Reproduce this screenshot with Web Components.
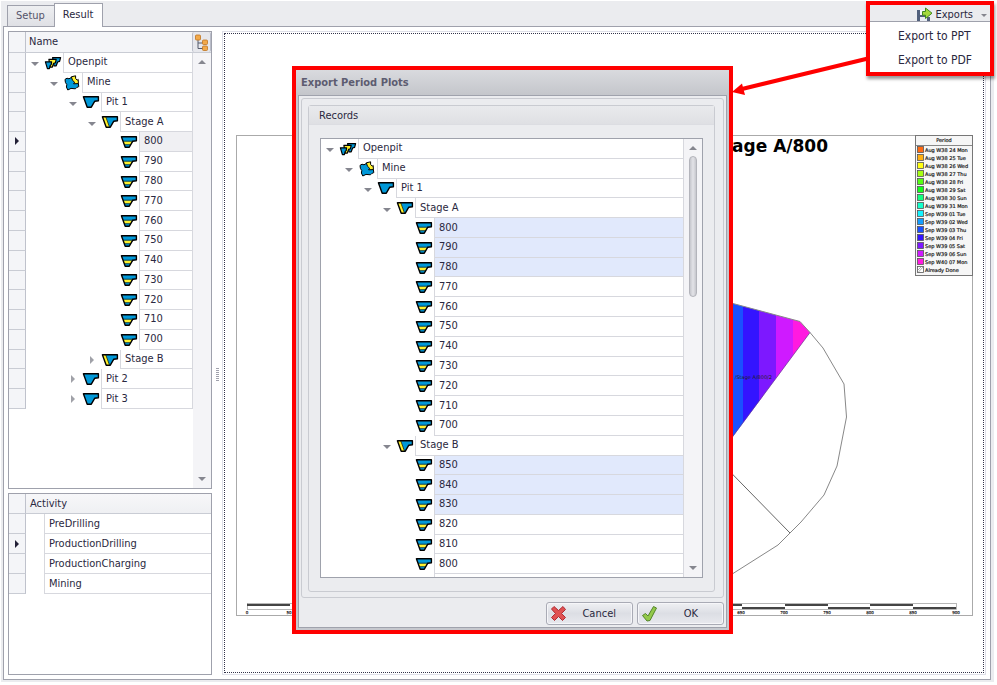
<!DOCTYPE html>
<html lang="en">
<head>
<meta charset="utf-8">
<title>Export Period Plots</title>
<style>
html,body{margin:0;height:100%;background:#fff}
body{font:11px/16px "DejaVu Sans Condensed","DejaVu Sans",sans-serif;color:#2a2840}
</style>
</head>
<body>
<plot-app></plot-app>
<script>
const make = (name, html) => customElements.define(name, class extends HTMLElement {
  constructor(){ super(); this.attachShadow({mode:'open'}); }
  connectedCallback(){
    if (this.shadowRoot.childNodes.length) return;
    this.shadowRoot.innerHTML = typeof html === 'function' ? html(this) : html;
  }
});

/* ---- icons ---- */
const PIT = 'M1.4 .8H16.400V4.700L12.800 5.200 9.300 11.200H5.200Z';
const edge = `<path d="${PIT}" fill="none" stroke="#000" stroke-width="1.400" stroke-linejoin="round"/>`;
const svg = body => `<svg width="18" height="16" viewBox="0 -2 18 16">${body}</svg>`;
const ICONS = {
  pit: svg(`<path d="${PIT}" fill="#0098d8"/>${edge}`),
  stage: svg(`<path d="${PIT}" fill="#0098d8"/><path d="M1.400 .8H5L8.600 11.200H5.200Z" fill="#fff22d"/><path d="M4.800 1 8.400 10.800" stroke="#000" stroke-width=".7"/>${edge}`),
  bench: svg(`<path d="${PIT}" fill="#0098d8"/><path d="M3.600 5.400H12.400L10.600 8.600H4.400Z" fill="#fff22d"/><path d="M3.200 5.200H13M4.200 8.700H10.600" stroke="#000" stroke-width=".6"/>${edge}`),
  openpit: svg(`<g stroke="#000" stroke-width="1.200" stroke-linejoin="round"><path d="M8.600 .6H16.600L15.600 4.400 13.600 5 12.200 8.800H10Z" fill="#0098d8"/><path d="M4.900 2.400H12.200L11.400 5.800 9.600 6.400 8.200 10.200H6.200Z" fill="#fff22d"/><path d="M1.400 4.800H7.600L7.200 7.600 6.200 8.400 5.400 11.600H3.400Z" fill="#0098d8"/></g>`),
  mine: `<svg width="18" height="16" viewBox="0 0 18 16"><g stroke="#000" stroke-width="1" stroke-linejoin="round"><path d="M2 4.400 4 3.200 6 3.800 9 2 13 5 15.400 9 15.800 11.600 13.600 12.600 12.400 13.800 8 13.400 4.800 15 3.400 12 3.800 9.600 2.400 7.400Z" fill="#0098d8"/><path d="M8.400 1.800 12.600 .8 12.600 3.400 14.200 5.200 15.200 4.400 15.400 8.600 10.600 8.800 11.600 7.200 9.400 5.200Z" fill="#fff22d"/></g></svg>`
};

make('tree-row', el => {
  const icon = el.getAttribute('icon'), lv = +el.getAttribute('level'), st = el.getAttribute('state');
  return `<style>
  :host{display:flex;min-height:0;--line:#d7d8de}
  .ind{width:16px;flex:none;background:#f4f5f8;border-right:1px solid #bfc2cc;border-bottom:1px solid #c9ccd4;display:var(--ind,flex);align-items:center;justify-content:center}
  .ind i{border:4px solid transparent;border-left-color:#222036;border-right:0}
  .pad{flex:none;width:${lv*19}px}
  button{flex:none;width:18px;padding:0;border:0;background:none;display:flex;align-items:center;justify-content:center}
  button i{border:4px solid transparent;border-top-color:#85868f;border-bottom:0;margin-top:3px}
  button.c i{border:4px solid transparent;border-left-color:#a0a1a8;border-right:0;margin:0}
  .sp{width:18px;flex:none}
  .ic{width:19px;flex:none;display:flex;align-items:center}
  .cell{flex:1;min-width:0;border-left:1px solid var(--line);border-bottom:1px solid var(--line);padding-left:4px;display:flex;align-items:center;white-space:nowrap}
  :host([sel]) .cell{background:#e1e9fc}
  :host([cur]) .cell{background:#f0f0f3}
  </style>
  <span class="ind">${el.hasAttribute('cur')?'<i></i>':''}</span><span class="pad"></span>
  ${st ? `<button class="${st==='closed'?'c':''}" aria-label="Toggle"><i></i></button>` : '<span class="sp"></span>'}
  <span class="ic">${ICONS[icon]||''}</span><span class="cell"><slot></slot></span>`;
});

make('scroll-strip', el => `<style>
  :host{display:flex;flex-direction:column;justify-content:space-between;align-items:center;background:#f4f4f7;width:18px;flex:none;box-sizing:border-box;padding:7px 0}
  i{border:4px solid transparent}
  .u{border-bottom-color:#85868f;border-top:0}.d{border-top-color:#85868f;border-bottom:0}
  .t{flex:1;width:100%;margin:6px 0;display:flex;justify-content:center;align-items:flex-start}
  .t b{display:${el.hasAttribute('thumb')?'block':'none'};box-sizing:border-box;width:8px;height:35%;border:1px solid #b3b4bb;border-radius:4px;background:linear-gradient(90deg,#c6c7cd,#e3e3e8 50%,#c6c7cd)}
  </style><i class="u"></i><span class="t"><b></b></span><i class="d"></i>`);

const row = (text, level, icon, extra='') => `<tree-row level="${level}" icon="${icon}" ${extra}>${text}</tree-row>`;
const open = 'state="open"', closed = 'state="closed"';
const benches = (from, to, mark={}) => {
  let s=''; for(let n=from;n>=to;n-=10) s+=row(n,4,'bench',mark[n]||''); return s;
};
const head = row('Openpit',0,'openpit',open)+row('Mine',1,'mine',open)+row('Pit 1',2,'pit',open)+row('Stage A',3,'stage',open);

make('result-tree', `<style>
  :host{display:grid;grid-template-rows:21px minmax(0,1fr);border:1px solid #9fa1ac;background:#fff;min-height:0}
  header{display:flex;background:#f4f5f8;border-bottom:1px solid #c9ccd4;box-sizing:border-box}
  .a{width:16px;border-right:1px solid #bfc2cc}
  .n{flex:1;padding-left:3px;line-height:20px}
  button{width:19px;padding:0;border:1px solid #b9bcc8;border-width:0 1px;border-radius:2px;background:#e6e7ec;display:flex;align-items:center;justify-content:center}
  main{display:flex;min-height:0}
  .rows{flex:1;display:grid;grid-auto-rows:1fr;height:356px;border-right:1px solid #d7d8de}
  </style>
  <header><span class="a"></span><span class="n">Name</span><button aria-label="Show hierarchy"><svg width="15" height="17" viewBox="0 0 15 17"><path d="M4 6V14.500H9M4 9H9" fill="none" stroke="#555b6c"/><g fill="#f2a94a" stroke="#bf7420" stroke-width=".8"><rect x="1.500" y="1" width="5" height="5" rx="1"/><rect x="8.500" y="6" width="5" height="4.500" rx="1"/><rect x="8.500" y="12" width="5" height="4.500" rx="1"/></g></svg></button></header>
  <main><div class="rows" role="tree" aria-label="Name">${head}${benches(800,700,{800:'cur'})}${row('Stage B',3,'stage',closed)}${row('Pit 2',2,'pit',closed)}${row('Pit 3',2,'pit',closed)}</div><scroll-strip></scroll-strip></main>`);

make('activity-grid', `<style>
  :host{display:block;border:1px solid #9fa1ac;background:#fff;min-height:0}
  table{width:100%;border-collapse:separate;border-spacing:0;table-layout:fixed}
  th,td{padding:0;height:19px;border-bottom:1px solid #d7d8de;text-align:left;font-weight:400;line-height:18px}
  th{background:linear-gradient(#f7f7f9,#eff0f3);border-color:#c9ccd4}
  .i{width:16px;background:#f4f5f8;border-right:1px solid #bfc2cc;border-bottom-color:#c9ccd4}
  .i i{display:block;width:0;margin-left:6px;border:4px solid transparent;border-left-color:#222036;border-right:0}
  .g{width:18px;border:0;border-right:1px solid #d7d8de}
  td:last-child,th:last-child{padding-left:4px}
  </style>
  <table><colgroup><col style="width:17px"><col style="width:19px"><col></colgroup>
  <tr><th class="i"></th><th colspan="2">Activity</th></tr>
  <tr><td class="i"></td><td class="g"></td><td>PreDrilling</td></tr>
  <tr><td class="i"><i></i></td><td class="g"></td><td>ProductionDrilling</td></tr>
  <tr><td class="i"></td><td class="g"></td><td>ProductionCharging</td></tr>
  <tr><td class="i"></td><td class="g"></td><td>Mining</td></tr></table>`);

/* ---- plot ---- */
const LEGEND = [['Aug W38 24 Mon','#ff6a13'],['Aug W38 25 Tue','#ffb013'],['Aug W38 26 Wed','#ffff13'],['Aug W38 27 Thu','#a6ff13'],['Aug W38 28 Fri','#55ff13'],['Aug W38 29 Sat','#13ff1c'],['Aug W38 30 Sun','#13ff80'],['Aug W39 31 Mon','#13ffcb'],['Sep W39 01 Tue','#13f3ff'],['Sep W39 02 Wed','#139dff'],['Sep W39 03 Thu','#1a50ff'],['Sep W39 04 Fri','#3414ff'],['Sep W39 05 Sat','#7d18ff'],['Sep W39 06 Sun','#cf1aff'],['Sep W40 07 Mon','#ff1ae0'],['Already Done','#fff']];
const legend = LEGEND.map(([t,c],i)=>`<rect x="917.5" y="${146.5+i*8}" width="6" height="6" fill="${c}" stroke="#555" stroke-width=".8"/><text x="925" y="${152+i*8}">${t}</text>`).join('');
const ticks = [650,700,750,800,850,900].map((t,i)=>`<text x="${741+i*43}" y="614" text-anchor="middle">${t}</text>`).join('');
const bars = [[247,290,1],[700,742,1],[742,785,0],[785,828,1],[828,870,0],[870,913,1],[913,956,0]].map(([a,b,up])=>`<rect x="${a}" y="${up?604:607}" width="${b-a}" height="2" fill="#444"/>`).join('');
make('period-plot', `<style>
  :host{display:block;box-sizing:border-box;border:1px solid #dedfe8;padding:1px;min-width:0;background:#fff}
  .focus{height:100%;box-sizing:border-box;border:1px dotted #33334a;padding:101px 9px 0 11px}
  svg{display:block;width:100%;height:auto}
  text{font-family:"DejaVu Sans",sans-serif;fill:#222}
  .small text{stroke:#222;stroke-width:.2px}
  </style>
  <div class="focus"><svg viewBox="236 135 738 482">
  <rect x="236.5" y="135.5" width="736" height="480" fill="#fff" stroke="#aaa"/>
  <text x="828" y="152" text-anchor="end" font-size="17" font-weight="700" style="fill:#000">Stage A/800</text>
  <clipPath id="w"><path d="M690 292 733 303.500 800 321.500 810 332.500 733 436.500 690 494Z"/></clipPath>
  <g clip-path="url(#w)"><rect x="690" y="290" width="53" height="205" fill="#1a50ff"/><rect x="743" y="290" width="16" height="205" fill="#3414ff"/><rect x="759" y="290" width="17" height="205" fill="#7d18ff"/><rect x="776" y="290" width="17" height="205" fill="#cf1aff"/><rect x="793" y="290" width="20" height="205" fill="#ff1ae0"/></g>
  <g fill="none" stroke="#888"><path d="M690 292 733 303.500 800 321.500 810 332.500 823 348 844 384 846.500 417 837 466 824 495 801 522 790 533 778 545 733 573.500 700 592"/><path d="M810 332.500 690 494" stroke="#643a90" stroke-width=".7"/><path d="M700 441 790 533" stroke="#666"/></g>
  <text x="772" y="379" text-anchor="end" font-size="5">/Stage A/800/2</text>
  <rect x="915.500" y="135.500" width="57" height="140" fill="#f6f6f6" stroke="#777"/><path d="M916 145.500H972" stroke="#888"/>
  <g class="small" font-size="5"><text x="944" y="142" text-anchor="middle">Period</text>${legend}<path d="M918.500 272 923 267M918 270 921 267" stroke="#888" stroke-width=".7"/></g>
  <rect x="247.500" y="603.500" width="709" height="6" fill="#fff" stroke="#999" stroke-width=".7"/>${bars}
  <g class="small" font-size="4">${ticks}<text x="247" y="614" text-anchor="middle">0</text><text x="289" y="614" text-anchor="middle">50</text></g>
  </svg></div>`);

make('export-menu', `<style>
  :host{display:block;box-sizing:border-box;border:4px solid #f00;background:#fff;box-shadow:1px 3px 3px rgba(0,0,0,.4)}
  .top{display:flex;align-items:center;justify-content:flex-end;gap:2px;width:100%;height:17px;padding:4px 3px 0 0;border:0;border-bottom:1px solid #9fa1ac;background:#ebecef;font:inherit;color:inherit;line-height:16px;overflow:hidden;box-sizing:border-box}
  .top i{border:3px solid transparent;border-top-color:#85868f;border-bottom:0;margin-left:6px}
  ul{list-style:none;margin:0;padding:1px 0 0 24px}
  li button{display:block;width:100%;height:25px;text-align:left;border:0;background:none;padding:0 0 0 4px;font:inherit;font-size:12px;color:inherit}
  li:last-child button{height:24px}
  </style>
  <button class="top"><svg width="17" height="16" viewBox="0 0 17 16"><path d="M1 3H4V8H10V10H14V14.500H1Z" fill="#51607c"/><path d="M4 10H11V15H4Z" fill="#e9edf4"/><path d="M4 3H8V8H4Z" fill="#f6f8fc"/><path d="M6.500 4.500H9.500V1L16 6.200 9.500 11.500V8.200H6.500Z" fill="#a5d93d" stroke="#3f8a1d"/></svg>Exports<i></i></button>
  <ul><li><button>Export to PPT</button></li><li><button>Export to PDF</button></li></ul>`);

make('period-dialog', `<style>
  :host{display:block;box-sizing:border-box;border:4px solid #f00;background:#c6c8ce;padding:0 2px 2px}
  h1{margin:0 -2px;padding-left:5px;font-size:11px;line-height:25px;color:#5d5c70;background:linear-gradient(#d9dade,#c4c6cb)}
  .body{border:1px solid #9fa2ac;background:#ebecef;padding:2px}
  .frame{border:1px solid #c9cbd1;border-radius:3px;padding:6px 8px 5px 6px}
  fieldset{display:block;margin:0;padding:0;min-width:0;border:1px solid #c9cbd1;border-radius:3px}
  h2{margin:0;padding-left:10px;font:inherit;line-height:20px;height:19px;background:linear-gradient(#e9eaed,#dfe0e4);border-bottom:1px solid #dcdde2;box-sizing:border-box}
  .list{display:flex;height:438px;margin:13px 11px;border:1px solid #9fa2ac;background:#fff;overflow:hidden;--ind:none}
  .rows{flex:1;display:grid;grid-auto-rows:1fr;height:455px;border-right:1px solid #d7d8de}
  footer{display:flex;justify-content:flex-end;gap:4px;padding-top:4px}
  footer button{display:flex;align-items:center;box-sizing:border-box;width:87px;height:23px;padding:0 16px 0 3px;border:1px solid #a9abb5;border-radius:3px;background:linear-gradient(#eff0f3,#dcdee4 50%,#e8e9ee);box-shadow:inset 0 0 0 1px #f6f6f9;font:inherit;color:inherit}
  footer span{flex:1;text-align:right}
  footer .ok{padding-right:25px}
  </style>
  <h1>Export Period Plots</h1>
  <div class="body"><div class="frame"><fieldset aria-label="Records"><h2>Records</h2>
  <div class="list"><div class="rows" role="tree" aria-label="Records">${head}${benches(800,700,{800:'sel',790:'sel',780:'sel'})}${row('Stage B',3,'stage',open)}${benches(850,800,{850:'sel',840:'sel',830:'sel'})}${row('',4,'')}</div><scroll-strip thumb></scroll-strip></div></fieldset></div>
  <footer><button><svg width="17" height="17" viewBox="0 0 17 17"><path d="M4 1.500 8.500 5.500 13 1.500 15.500 4.500 11.500 8.500 15.500 12.500 12.500 15.500 8.500 11.500 4.500 15.500 1.500 12.500 5.500 8.500 1.500 4Z" fill="#e05252" stroke="#b02a33" stroke-linejoin="round"/></svg><span>Cancel</span></button>
  <button class="ok"><svg width="17" height="17" viewBox="0 0 17 17"><path d="M1.500 10.500 4.500 8.500 7 11 12.500 1.500 15.500 3 9 15.500 6 16Z" fill="#93c94a" stroke="#54852a" stroke-linejoin="round"/></svg><span>OK</span></button></footer></div>`);

make('tab-strip', `<style>
  :host{display:flex;align-items:flex-end;padding-left:4px;height:25px}
  button{box-sizing:border-box;height:21px;border:1px solid #9fa1ac;border-bottom:0;border-right:0;background:linear-gradient(#eeeff1,#dfe0e5);padding:0 9px 0 8px;font:inherit;color:#55546a}
  .on{position:relative;height:24px;margin-bottom:-1px;border-right:1px solid #9fa1ac;background:#fff;color:inherit;padding:0 9px 1px 8px}
  </style><button role="tab">Setup</button><button role="tab" class="on" aria-selected="true">Result</button>`);

make('plot-app', `<style>
  :host{position:relative;display:flex;flex-direction:column;box-sizing:border-box;height:100vh;border:solid #fff;border-width:1px 3px 3px 1px;background:#ebecef;padding:0 3px 2px 2px}
  .panel{flex:1;min-height:0;display:grid;grid-template-columns:204px 10px minmax(0,1fr);border:1px solid #9fa1ac;background:#fff;padding:4px}
  .side{display:grid;grid-template-rows:minmax(0,458fr) minmax(0,182fr);gap:4px;min-height:0}
  .split{display:flex;align-items:center;justify-content:center}
  .split i{width:3px;height:14px;margin-top:44px;background:repeating-linear-gradient(#a0a1ac 0 1px,#fff 1px 2px)}
  export-menu{position:absolute;top:0;right:0;width:128px}
  period-dialog{position:absolute;left:291px;top:65px;width:441px}
  .arrow{position:absolute;left:731px;top:50px}
  </style>
  <tab-strip></tab-strip>
  <div class="panel"><div class="side"><result-tree></result-tree><activity-grid></activity-grid></div><div class="split"><i></i></div><period-plot></period-plot></div>
  <export-menu></export-menu><period-dialog role="dialog" aria-label="Export Period Plots"></period-dialog>
  <svg class="arrow" width="137" height="50"><path d="M136 7.500 10 38" stroke="#f00" stroke-width="4"/><path d="M0 41 10 32.500 13 44Z" fill="#f00"/></svg>`);
</script>
</body>
</html>
